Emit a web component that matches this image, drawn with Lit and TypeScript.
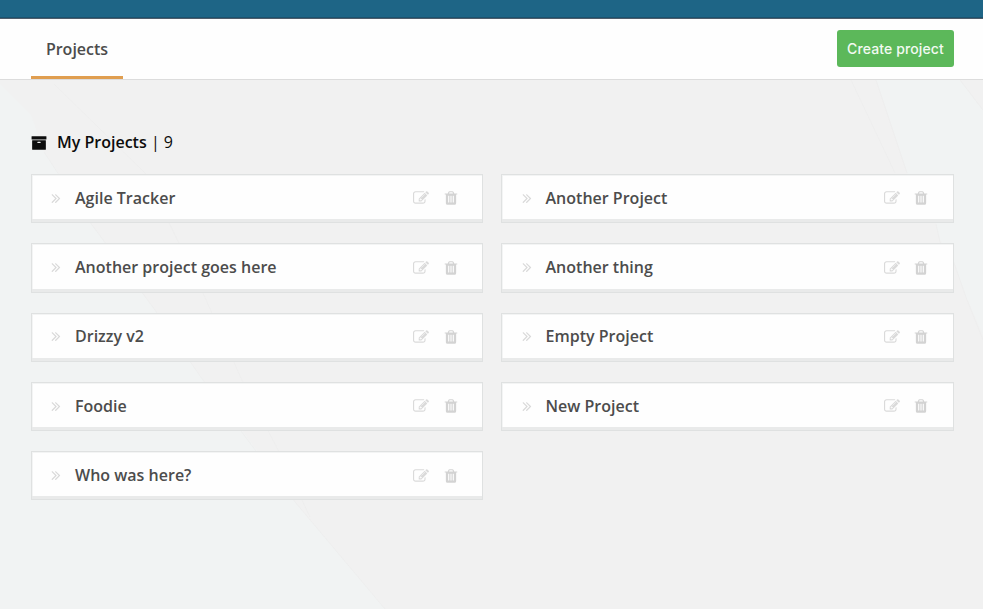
import { LitElement, html, css, svg } from "lit";
import { customElement } from "lit/decorators.js";

const ICONS = {
  archive:
    "M1088 832q0-26-19-45t-45-19h-256q-26 0-45 19t-19 45 19 45 45 19h256q26 0 45-19t19-45zm576-192v960q0 26-19 45t-45 19h-1408q-26 0-45-19t-19-45v-960q0-26 19-45t45-19h1408q26 0 45 19t19 45zm64-448v256q0 26-19 45t-45 19h-1536q-26 0-45-19t-19-45v-256q0-26 19-45t45-19h1536q26 0 45 19t19 45z",
  edit:
    "M888 1184l116-116-152-152-116 116v56h96v96h56zm440-720q-16-16-33 1l-350 350q-17 17-1 33t33-1l350-350q17-17 1-33zm80 594v190q0 119-84.500 203.500t-203.500 84.500h-832q-119 0-203.500-84.500t-84.500-203.500v-832q0-119 84.500-203.500t203.500-84.500h832q63 0 117 25 15 7 18 23 3 17-9 29l-49 49q-14 14-32 8-23-6-45-6h-832q-66 0-113 47t-47 113v832q0 66 47 113t113 47h832q66 0 113-47t47-113v-126q0-13 9-22l64-64q15-15 35-7t20 29zm-96-738l288 288-672 672h-288v-288zm444 132l-92 92-288-288 92-92q28-28 68-28t68 28l152 152q28 28 28 68t-28 68z",
  trash:
    "M704 1376v-704q0-14-9-23t-23-9h-64q-14 0-23 9t-9 23v704q0 14 9 23t23 9h64q14 0 23-9t9-23zm256 0v-704q0-14-9-23t-23-9h-64q-14 0-23 9t-9 23v704q0 14 9 23t23 9h64q14 0 23-9t9-23zm256 0v-704q0-14-9-23t-23-9h-64q-14 0-23 9t-9 23v704q0 14 9 23t23 9h64q14 0 23-9t9-23zm-544-992h448l-48-117q-7-9-17-11h-317q-10 2-17 11zm928 32v64q0 14-9 23t-23 9h-96v948q0 83-47 143.500t-113 60.500h-832q-66 0-113-58.500t-47-141.500v-952h-96q-14 0-23-9t-9-23v-64q0-14 9-23t23-9h309l70-167q15-37 54-63t79-26h320q40 0 79 26t54 63l70 167h309q14 0 23 9t9 23z",
  chevrons:
    "M979 960q0 13-10 23l-466 466q-10 10-23 10t-23-10l-50-50q-10-10-10-23t10-23l393-393-393-393q-10-10-10-23t10-23l50-50q10-10 23-10t23 10l466 466q10 10 10 23zm384 0q0 13-10 23l-466 466q-10 10-23 10t-23-10l-50-50q-10-10-10-23t10-23l393-393-393-393q-10-10-10-23t10-23l50-50q10-10 23-10t23 10l466 466q10 10 10 23z",
};

const PROJECTS = [
  "Agile Tracker",
  "Another Project",
  "Another project goes here",
  "Another thing",
  "Drizzy v2",
  "Empty Project",
  "Foodie",
  "New Project",
  "Who was here?",
];

const icon = (name: keyof typeof ICONS) => html`
  <svg class="icon ${name}" viewBox="0 0 1792 1792" aria-hidden="true">
    ${svg`<path d=${ICONS[name]}></path>`}
  </svg>
`;

@customElement("project-card")
class ProjectCard extends LitElement {
  static properties = { name: {} };
  declare name: string;

  static styles = css`
    :host {
      display: flex;
      align-items: center;
      box-sizing: border-box;
      height: 49.300px;
      padding: 0 23.500px 2px 16.500px;
      background: #fefefe;
      border: 1px solid #dfe1e1;
      box-shadow: inset 0 -3px 0 #e9eaea, inset 1px 1px 0 #f3f4f4;
    }
    .icon {
      display: block;
      width: 16px;
      height: 16px;
      flex: none;
      fill: #dadada;
    }
    .chevrons {
      fill: #d9d9d9;
    }
    .name {
      flex: 1;
      margin-left: 11px;
      font-size: 16px;
      font-weight: 600;
      letter-spacing: 0.010px;
      color: #4c4c4c;
      line-height: 22px;
    }
    .actions {
      display: flex;
      gap: 13.500px;
      padding-top: 1.400px;
    }
    .trash {
      fill: #d3d3d3;
    }
  `;

  render() {
    return html`
      ${icon("chevrons")}
      <span class="name">${this.name}</span>
      <span class="actions">${icon("edit")}${icon("trash")}</span>
    `;
  }
}

@customElement("app-root")
class AppRoot extends LitElement {
  static styles = css`
    :host {
      display: flex;
      flex-direction: column;
      height: 609px;
      overflow: hidden;
      position: relative;
      background: #f1f1f1;
      font-family: "Open Sans", "Noto Sans", sans-serif;
    }
    .facets {
      position: absolute;
      inset: 0;
      width: 983px;
      height: 609px;
    }
    .tint {
      fill: #f1f3f3;
    }
    .crease {
      fill: none;
      stroke: #ededed;
      stroke-width: 0.700;
    }
    .topbar {
      position: relative;
      flex: none;
      box-sizing: border-box;
      height: 19px;
      background: #1e6586;
      border-bottom: 1px solid #4f5c6a;
      box-shadow: inset 0 -1px 0 #1b536f;
    }
    .nav {
      position: relative;
      flex: none;
      box-sizing: border-box;
      height: 61px;
      display: flex;
      justify-content: space-between;
      align-items: flex-start;
      padding: 0 29px 0 31px;
      background: #fefefe;
      border-bottom: 1px solid #dcdcdc;
    }
    .tab {
      box-sizing: border-box;
      height: 60px;
      width: 92px;
      text-align: center;
      border-bottom: 3px solid #e09e50;
      color: #4c4c4c;
      font-size: 16px;
      font-weight: 600;
      line-height: 60px;
    }
    .create {
      margin-top: 11px;
      box-sizing: border-box;
      width: 117px;
      height: 37px;
      padding: 0;
      border: 0;
      border-radius: 3px;
      background: #5cb85a;
      color: #f2faf2;
      font: 500 14px/37px Inter, sans-serif;
      letter-spacing: 0.120px;
    }
    .content {
      position: relative;
      padding: 51px 29.500px 0 30.500px;
    }
    .heading {
      display: flex;
      align-items: center;
      margin: 0 0 21px;
      font-size: 16px;
      line-height: 22px;
      font-weight: 600;
      color: #0c0c0c;
    }
    .heading .icon {
      width: 16px;
      height: 16px;
      margin: 1px 10px 0 0.500px;
      fill: #0c0c0c;
    }
    .count {
      font-weight: 400;
      white-space: pre;
    }
    .grid {
      display: grid;
      grid-template-columns: 452.500px 452.500px;
      column-gap: 18px;
      row-gap: 20px;
    }
  `;

  render() {
    return html`
      <svg class="facets" viewBox="0 0 983 609" aria-hidden="true">
        <path class="tint" d="M0 84L31 115L44 152L60 175L92 225L125 270L155 310L200 376L240 427L285 490L310 520L385 609H0Z"></path>
        <path class="tint" d="M876 80H960L983 110V335L967 300L953 260L940 240L933 210L907 173Z"></path>
        <path class="crease" d="M54 84L145 173L203 293L240 376L278 450L310 517M44 152L92 225L155 310L200 376L285 490L385 609"></path>
        <path class="crease" d="M851 80L895 173M876 80L907 173M960 80L983 110M936 224L940 242L953 260L967 300L983 340"></path>
      </svg>
      <header class="topbar"></header>
      <nav class="nav">
        <div class="tab">Projects</div>
        <button class="create">Create project</button>
      </nav>
      <main class="content">
        <h1 class="heading">
          ${icon("archive")}<span>My Projects</span><span class="count"> | 9</span>
        </h1>
        <div class="grid">
          ${PROJECTS.map((name) => html`<project-card .name=${name}></project-card>`)}
        </div>
      </main>
    `;
  }
}
